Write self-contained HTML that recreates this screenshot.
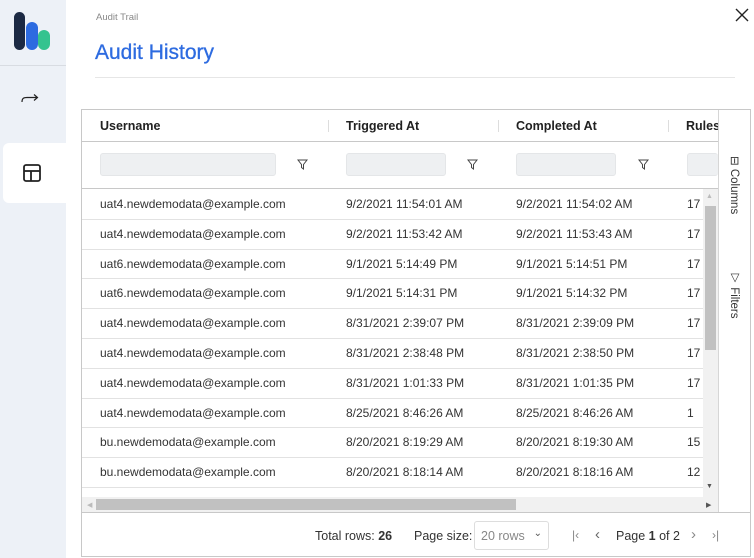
<!DOCTYPE html>
<html><head><style>
*{margin:0;padding:0;box-sizing:border-box}
body{width:754px;height:558px;overflow:hidden;background:#fff;font-family:"Liberation Sans",sans-serif;position:relative;color:#222}
.a{position:absolute}
.side{left:0;top:0;width:66px;height:558px;background:#edf1f7}
.cell{position:absolute;font-size:12px;color:#333;white-space:nowrap}
.hd{position:absolute;font-size:12.5px;font-weight:bold;color:#222;top:119px}
.inp{position:absolute;top:153px;height:23px;background:#eef0f2;border-radius:3px;border:1px solid #e4e6e8}
.row{position:absolute;left:82px;width:621px;height:1px;background:#e2e2e2}
</style></head><body>
<div class="a side"></div>
<div class="a" style="left:0;top:65px;width:66px;height:1px;background:#d8dce2"></div>
<div class="a" style="left:14px;top:12px;width:11px;height:38px;background:#1c2a44;border-radius:6px"></div>
<div class="a" style="left:26px;top:22px;width:12px;height:28px;background:#2d6be0;border-radius:6px"></div>
<div class="a" style="left:38px;top:30px;width:12px;height:20px;background:#34c38f;border-radius:6px"></div>
<svg class="a" style="left:21px;top:93px" width="18" height="10"><path d="M1 9C1 5 3 4.5 6 4.5H16M13 1.5L16.5 4.5L13 7.5" fill="none" stroke="#222" stroke-width="1.2"/></svg>
<div class="a" style="left:3px;top:143px;width:63px;height:60px;background:#fff;border-radius:6px 0 0 6px"></div>
<svg class="a" style="left:23px;top:164px" width="18" height="18" viewBox="0 0 18 18"><rect x="1" y="1" width="16" height="16" rx="2" fill="none" stroke="#222" stroke-width="1.8"/><line x1="1" y1="7" x2="17" y2="7" stroke="#222" stroke-width="1.8"/><line x1="8" y1="7" x2="8" y2="17" stroke="#222" stroke-width="1.8"/></svg>

<div class="a" style="left:96px;top:12px;font-size:9.5px;color:#888">Audit Trail</div>
<div class="a" style="left:95px;top:41px;font-size:21px;color:#2d6be0;-webkit-text-stroke:0.3px #2d6be0">Audit History</div>
<div class="a" style="left:95px;top:77px;width:640px;height:1px;background:#e6e6e6"></div>
<svg class="a" style="left:735px;top:8px" width="14" height="14"><path d="M1 1L13 13M13 1L1 13" stroke="#222" stroke-width="1.4"/></svg>

<div class="a" style="left:81px;top:109px;width:670px;height:448px;border:1px solid #c8c8c8"></div>
<div class="a" style="left:82px;top:141px;width:636px;height:1px;background:#c8c8c8"></div>
<div class="a" style="left:82px;top:188px;width:636px;height:1px;background:#c8c8c8"></div>
<div class="a" style="left:718px;top:110px;width:1px;height:402px;background:#d6d6d6"></div>
<div class="a" style="left:82px;top:512px;width:668px;height:1px;background:#c8c8c8"></div>
<div class="hd" style="left:100px">Username</div>
<div class="hd" style="left:346px">Triggered At</div>
<div class="hd" style="left:516px">Completed At</div>
<div class="hd" style="left:686px;width:32px;overflow:hidden">Rules</div>
<div class="a" style="left:328px;top:120px;width:1px;height:12px;background:#ddd"></div>
<div class="a" style="left:498px;top:120px;width:1px;height:12px;background:#ddd"></div>
<div class="a" style="left:668px;top:120px;width:1px;height:12px;background:#ddd"></div>
<div class="inp" style="left:100px;width:176px"></div>
<div class="inp" style="left:346px;width:100px"></div>
<div class="inp" style="left:516px;width:100px"></div>
<div class="inp" style="left:687px;width:31px;border-right:none"></div>
<svg class="a" style="left:297px;top:159px" width="11" height="11"><path d="M1 1H10L6.5 5.5V10L4.5 8.5V5.5Z" fill="none" stroke="#444"/></svg>
<svg class="a" style="left:467px;top:159px" width="11" height="11"><path d="M1 1H10L6.5 5.5V10L4.5 8.5V5.5Z" fill="none" stroke="#444"/></svg>
<svg class="a" style="left:638px;top:159px" width="11" height="11"><path d="M1 1H10L6.5 5.5V10L4.5 8.5V5.5Z" fill="none" stroke="#444"/></svg>

<div id="rows"></div>
<script>
var d=[["uat4.newdemodata@example.com","9/2/2021 11:54:01 AM","9/2/2021 11:54:02 AM","17"],
["uat4.newdemodata@example.com","9/2/2021 11:53:42 AM","9/2/2021 11:53:43 AM","17"],
["uat6.newdemodata@example.com","9/1/2021 5:14:49 PM","9/1/2021 5:14:51 PM","17"],
["uat6.newdemodata@example.com","9/1/2021 5:14:31 PM","9/1/2021 5:14:32 PM","17"],
["uat4.newdemodata@example.com","8/31/2021 2:39:07 PM","8/31/2021 2:39:09 PM","17"],
["uat4.newdemodata@example.com","8/31/2021 2:38:48 PM","8/31/2021 2:38:50 PM","17"],
["uat4.newdemodata@example.com","8/31/2021 1:01:33 PM","8/31/2021 1:01:35 PM","17"],
["uat4.newdemodata@example.com","8/25/2021 8:46:26 AM","8/25/2021 8:46:26 AM","1"],
["bu.newdemodata@example.com","8/20/2021 8:19:29 AM","8/20/2021 8:19:30 AM","15"],
["bu.newdemodata@example.com","8/20/2021 8:18:14 AM","8/20/2021 8:18:16 AM","12"],
["uat4.newdemodata@example.com","8/19/2021 4:12:00 PM","8/19/2021 4:12:02 PM","17"]];
var h="",x=[100,346,516,687];
for(var i=0;i<d.length;i++){var t=197+i*29.8;
if(i>0)h+='<div class="row" style="top:'+(189+i*29.8)+'px"></div>';
for(var j=0;j<4;j++)h+='<div class="cell" style="left:'+x[j]+'px;top:'+t+'px">'+d[i][j]+'</div>';}
document.getElementById("rows").innerHTML=h;
</script>
<div class="a" style="left:82px;top:497px;width:636px;height:15px;background:#f1f1f1"></div>
<div class="a" style="left:96px;top:499px;width:420px;height:11px;background:#c1c1c1"></div>
<div class="a" style="left:87px;top:501px;font-size:7px;color:#bbb">&#9664;</div>
<div class="a" style="left:706px;top:501px;font-size:7px;color:#555">&#9654;</div>
<div class="a" style="left:703px;top:189px;width:15px;height:308px;background:#f1f1f1"></div>
<div class="a" style="left:705px;top:206px;width:11px;height:144px;background:#c1c1c1"></div>
<div class="a" style="left:706px;top:193px;font-size:7px;color:#bbb">&#9650;</div>
<div class="a" style="left:706px;top:483px;font-size:7px;color:#555">&#9660;</div>
<div class="a" style="left:727px;top:156px;font-size:11.5px;color:#333;writing-mode:vertical-rl">&#8863; Columns</div>
<div class="a" style="left:727px;top:270px;font-size:11.5px;color:#333;writing-mode:vertical-rl">&#9661; Filters</div>
<div class="a" style="left:315px;top:529px;font-size:12.5px;color:#333">Total rows: <b style="font-weight:600">26</b></div>
<div class="a" style="left:414px;top:529px;font-size:12.5px;color:#333">Page size:</div>
<div class="a" style="left:474px;top:521px;width:75px;height:29px;border:1px solid #ddd;border-radius:3px;font-size:12.5px;color:#888;padding:7px 6px">20 rows <span style="position:absolute;right:6px;top:6px;font-size:10px;color:#555">&#8964;</span></div>
<div class="a" style="left:572px;top:528px;font-size:12px;color:#888">|&lsaquo;</div>
<div class="a" style="left:595px;top:526px;font-size:15px;color:#666">&lsaquo;</div>
<div class="a" style="left:616px;top:529px;font-size:12.5px;color:#333">Page <b>1</b> of 2</div>
<div class="a" style="left:691px;top:526px;font-size:15px;color:#888">&rsaquo;</div>
<div class="a" style="left:712px;top:528px;font-size:12px;color:#888">&rsaquo;|</div>
</body></html>
